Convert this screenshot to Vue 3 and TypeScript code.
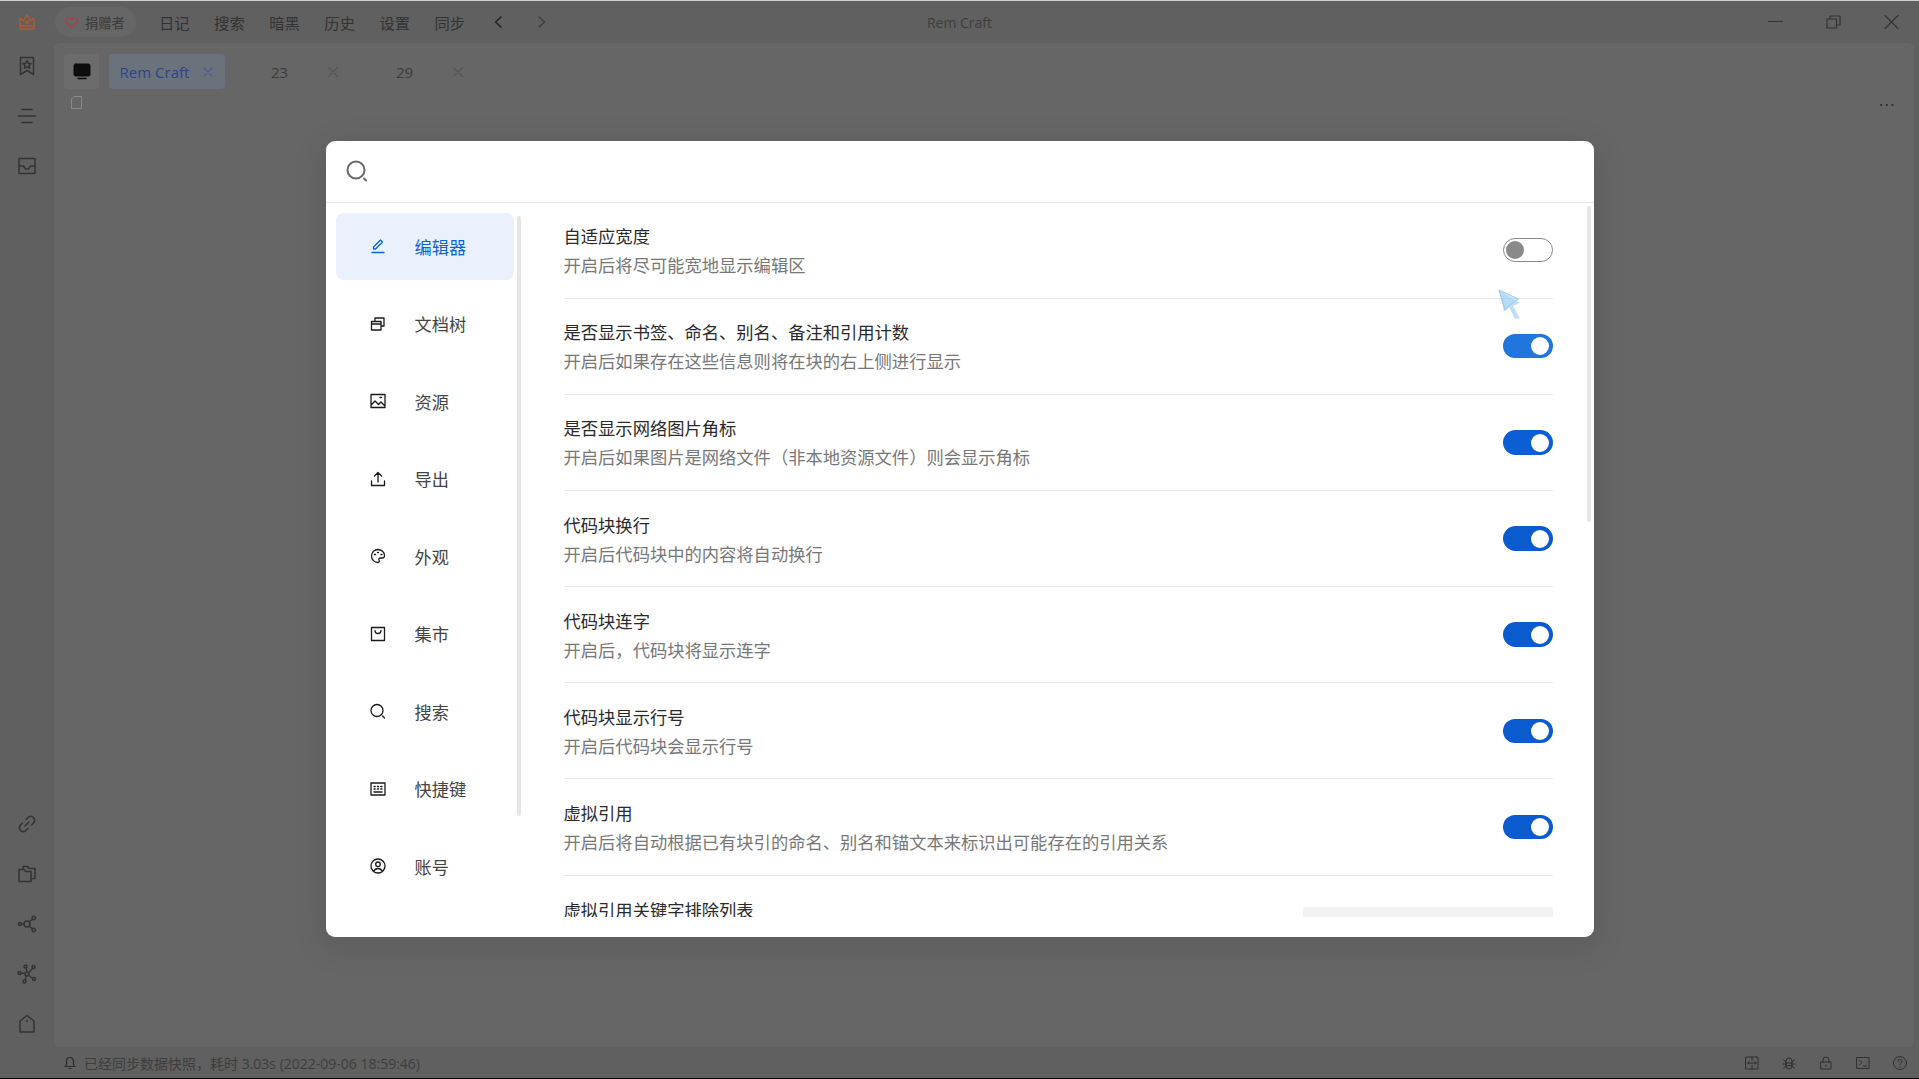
<template>
  <div class="app">
    <div class="topline"></div>
    <header class="topbar">
      <svg class="crown" viewBox="0 0 18 18"><path d="M2 5l3.5 3L9 2l3.5 6L16 5v11H2zM2 13h14" /><circle cx="9" cy="9.5" r="1.3" /></svg>
      <div class="donor">
        <svg class="heart" viewBox="0 0 14 14"><path d="M7 12.6L1.8 7.2a3.2 3.2 0 0 1 0-4.4 3 3 0 0 1 4.3 0L7 3.8l.9-1a3 3 0 0 1 4.3 0 3.2 3.2 0 0 1 0 4.4z" /></svg>
        <span>捐赠者</span>
      </div>
      <nav class="menu">
        <span v-for="m in menus" :key="m">{{ m }}</span>
      </nav>
      <div class="arrows">
        <svg class="back" viewBox="0 0 10 14"><path d="M8 2L2.5 7 8 12" /></svg>
        <svg class="forward" viewBox="0 0 10 14"><path d="M2 2l5.5 5L2 12" /></svg>
      </div>
      <div class="wintitle">Rem Craft</div>
      <div class="winctl">
        <svg viewBox="0 0 15 14"><path d="M0 6.5h15" /></svg>
        <svg viewBox="0 0 15 14"><path d="M1 4h9.5v9H1zM4 4V1h10v9h-3.5" /></svg>
        <svg viewBox="0 0 15 14"><path d="M1 .5l13 13M14 .5l-13 13" /></svg>
      </div>
    </header>

    <div class="middle">
      <aside class="rail">
        <div class="rail-group">
          <svg v-for="i in railTop" :key="i" viewBox="0 0 20 20"><path :d="i" /></svg>
        </div>
        <div class="rail-group">
          <svg v-for="i in railBottom" :key="i" viewBox="0 0 20 20"><path :d="i" /></svg>
        </div>
      </aside>
      <main class="panel">
        <div class="tabs">
          <div class="tab-icon">
            <svg viewBox="0 0 18 18"><rect x="1" y="1" width="16" height="12" rx="1.5" fill="#0d0d0d" stroke="#0d0d0d" /><path d="M5 15.5h8" stroke="#0d0d0d" fill="none" stroke-width="1.6" /></svg>
          </div>
          <div v-for="(t, i) in tabs" :key="t" class="tab" :class="{ on: i === 0 }">
            <span class="tab-name">{{ t }}</span>
            <svg viewBox="0 0 10 10"><path d="M.5.5l9 9M9.5.5l-9 9" /></svg>
          </div>
        </div>
        <div class="docline">
          <svg class="doc" viewBox="0 0 11 13"><path d="M3.5.5h7v12H.5V3.5z" /></svg>
          <span class="dots">...</span>
        </div>
      </main>
    </div>

    <footer class="status">
      <svg class="bell" viewBox="0 0 12 14"><path d="M1 10.5h10L9.5 8.5V5a3.5 3.5 0 0 0-7 0v3.5zM5 12.5h2" /></svg>
      <span class="status-text">已经同步数据快照，耗时 3.03s (2022-09-06 18:59:46)</span>
      <div class="status-icons">
        <svg v-for="i in statusIcons" :key="i" viewBox="0 0 14 14"><path :d="i" /></svg>
      </div>
    </footer>

    <div class="overlay">
      <section class="dialog">
        <div class="search">
          <svg viewBox="0 0 22 22"><circle cx="10" cy="10" r="8.5" /><path d="M18 18.5l2 2" /></svg>
        </div>
        <div class="body">
          <ul class="nav">
            <li v-for="(n, i) in navItems" :key="n.label" :class="{ on: i === 0 }">
              <svg viewBox="0 0 16 16"><path :d="n.icon" /></svg>
              <span>{{ n.label }}</span>
            </li>
          </ul>
          <div class="nav-bar"></div>
          <div class="rows">
            <div v-for="r in rows" :key="r.title" class="row">
              <div class="row-text">
                <div class="row-title">{{ r.title }}</div>
                <div class="row-desc">{{ r.desc }}</div>
              </div>
              <span class="toggle" :class="r.state"></span>
            </div>
            <div class="row last">
              <div class="row-text">
                <div class="row-title">虚拟引用关键字排除列表</div>
                <div class="row-desc">&nbsp;</div>
              </div>
              <div class="field"></div>
            </div>
          </div>
          <div class="rows-bar"></div>
        </div>
        <svg class="cursor" viewBox="0 0 30 34">
          <path class="cursor-glow" d="M4 3l20 12-7 3 7 12-5 1-6-12-5 4z" />
          <path class="cursor-line" d="M3 2l19 9-8 6-5 5z" />
        </svg>
      </section>
    </div>
  </div>
</template>

<script setup lang="ts">
const menus = ['日记', '搜索', '暗黑', '历史', '设置', '同步']
const tabs = ['Rem Craft', '23', '29']

const railTop = [
  'M3.5 1.5h13v17L10 14.5l-6.5 4zM10 4.5l1.3 2.7 2.7.3-2 1.9.6 2.8L10 10.8l-2.6 1.4.6-2.8-2-1.9 2.7-.3z',
  'M5 3.5h10M1.5 10h17M5 16.5h10',
  'M2 2.5h16v15H2zM2 10h4.500l2 3h3l2-3H18',
]
const railBottom = [
  'M8 12l4-4M9 5.500l2.500-2.500a4 4 0 0 1 5.500 5.500L14.500 11M11 14.500L8.500 17A4 4 0 0 1 3 11.500L5.500 9',
  'M6 5V2.500h4.500l1.500 2h6v10h-4M2 5.500h5l1.500 2H14V17.500H2z',
  'M7 10a3 3 0 1 0 6 0 3 3 0 0 0-6 0zM1.500 10a1.500 1.500 0 1 0 3 0 1.500 1.500 0 0 0-3 0zM15 4a1.700 1.700 0 1 0 3.400 0A1.700 1.700 0 0 0 15 4zM15 16a1.700 1.700 0 1 0 3.400 0A1.700 1.700 0 0 0 15 16zM4.500 10H7M12 8l3.500-3M12 12l3.500 3',
  'M8 10a2 2 0 1 0 4 0 2 2 0 0 0-4 0zM1 9a1.500 1.500 0 1 0 3 0 1.500 1.500 0 0 0-3 0zM7 2.500a1.500 1.500 0 1 0 3 0 1.500 1.500 0 0 0-3 0zM15 3a1.500 1.500 0 1 0 3 0 1.500 1.500 0 0 0-3 0zM15.500 15a1.500 1.500 0 1 0 3 0 1.500 1.500 0 0 0-3 0zM6 17.500a1.500 1.500 0 1 0 3 0 1.500 1.500 0 0 0-3 0zM4 9.300h4M9 4l1 4M15.500 4.500L12 8.500M15.500 14.500L12 11.500M8 16l1.500-4.500',
  'M3 7l7-5.500L17 7v11H3zM10 6.500v1',
]
const statusIcons = [
  'M1 1h12v12H1zM7 1v3.500M7 9.500V13M3 7h8M3 7l1.500-1.300M3 7l1.500 1.300M11 7L9.500 5.700M11 7L9.500 8.300',
  'M4 5a3 3 0 0 1 6 0v5a3 3 0 0 1-6 0zM4 7h6M4 9.500h6M1.500 4L4 5.500M12.500 4L10 5.500M1 8h3M13 8h-3M1.500 12L4 10.500M12.500 12L10 10.500',
  'M2 6h10v7H2zM4 6V4a3 3 0 0 1 6 0v2M7 9v1.500',
  'M1 1.500h12v11H1zM3.500 4l2.500 2.500L3.500 9M7.500 10h3',
  'M13.500 7a6.500 6.500 0 1 1-13 0 6.500 6.500 0 0 1 13 0zM5 5.300a2 2 0 1 1 3 1.700c-.7.400-1 .8-1 1.500M7 10.300v.7',
]

const navItems = [
  { label: '编辑器', icon: 'M2 14.500h12M3.500 11V9l7-7 2 2-7 7z' },
  { label: '文档树', icon: 'M5 5V2h9v8h-3M1.500 5.500H11V14H1.500zM1.500 8h9.500' },
  { label: '资源', icon: 'M1 1.500h14v13H1zM1 12l4-4 3.500 3.500L11 9l4 4M10 4.500h1.500' },
  { label: '导出', icon: 'M1.500 10v4.500h13V10M8 11V2M4.500 5L8 1.500 11.500 5' },
  { label: '外观', icon: 'M8 1.500a6.500 6.500 0 1 0 0 13c1.500 0 1.500-1.500 1-2.500s0-2 1.500-2h2c1.500 0 2-1.500 2-2.500 0-3.500-3-6-6.500-6zM4.500 6.500h1M7.500 4.500h1M11 6.500h1' },
  { label: '集市', icon: 'M1.500 1.500h13v13h-13zM5 4.500a3 3 0 0 0 6 0' },
  { label: '搜索', icon: 'M13 7.500a6 6 0 1 1-12 0 6 6 0 0 1 12 0zM12.500 13l2 2' },
  { label: '快捷键', icon: 'M1 2h14v12H1zM4 5.500h1.200M7.400 5.500h1.200M10.800 5.500H12M4 8h1.200M7.400 8h1.200M10.800 8H12M4 11h8' },
  { label: '账号', icon: 'M15 8A7 7 0 1 1 1 8a7 7 0 0 1 14 0zM10.300 6.300a2.300 2.300 0 1 1-4.600 0 2.300 2.300 0 0 1 4.600 0zM3.500 13.500c1-2 2.500-3 4.500-3s3.500 1 4.500 3' },
]

const rows = [
  { title: '自适应宽度', desc: '开启后将尽可能宽地显示编辑区', state: 'off' },
  { title: '是否显示书签、命名、别名、备注和引用计数', desc: '开启后如果存在这些信息则将在块的右上侧进行显示', state: 'light' },
  { title: '是否显示网络图片角标', desc: '开启后如果图片是网络文件（非本地资源文件）则会显示角标', state: 'mid' },
  { title: '代码块换行', desc: '开启后代码块中的内容将自动换行', state: 'dark' },
  { title: '代码块连字', desc: '开启后，代码块将显示连字', state: 'dark' },
  { title: '代码块显示行号', desc: '开启后代码块会显示行号', state: 'dark' },
  { title: '虚拟引用', desc: '开启后将自动根据已有块引的命名、别名和锚文本来标识出可能存在的引用关系', state: 'dark' },
]
</script>

<style>
html, body { margin: 0; background: #606060; overflow: hidden; }
</style>

<style scoped>
* { box-sizing: border-box; }
svg { display: block; fill: none; stroke-linecap: round; stroke-linejoin: round; }

.app {
  position: relative;
  width: 100%;
  height: 100vh;
  display: flex;
  flex-direction: column;
  background: #606060;
  color: #333;
  font-family: "Noto Sans CJK SC", "Open Sans", sans-serif;
  border-bottom: 1px solid #000;
  overflow: hidden;
}
.topline { height: 1px; background: #d0d0d0; flex: none; }

.topbar {
  position: relative;
  height: 42px;
  flex: none;
  display: flex;
  align-items: center;
  padding-left: 18px;
}
.crown { width: 18px; height: 18px; stroke: #b05a30; stroke-width: 1.4; }
.donor {
  margin-left: 19px;
  width: 81px;
  height: 30px;
  border-radius: 15px;
  background: #666;
  display: flex;
  align-items: center;
  padding-left: 10px;
  gap: 7px;
  font-size: 13.3px;
  color: #3a3a3a;
}
.heart { width: 13px; height: 13px; stroke: #b83a3a; stroke-width: 1.2; }
.menu { margin-left: 23px; display: flex; gap: 24.500px; font-size: 15.300px; color: #333; }
.arrows { margin-left: 28px; display: flex; gap: 34px; }
.arrows svg { width: 10px; height: 14px; stroke-width: 1.600; }
.back { stroke: #222; }
.forward { stroke: #3d3d3d; stroke-width: 1.200; }
.wintitle {
  position: absolute;
  left: 0;
  right: 0;
  text-align: center;
  font-family: "Open Sans", sans-serif;
  font-size: 14px;
  color: #3d3d3d;
}
.winctl { margin-left: auto; display: flex; gap: 43px; padding-right: 20px; }
.winctl svg { width: 15px; height: 14px; stroke: #333; stroke-width: 1.200; }

.middle { flex: 1; display: flex; min-height: 0; }
.rail {
  width: 54px;
  flex: none;
  display: flex;
  flex-direction: column;
  justify-content: space-between;
  padding: 13px 0 13px;
}
.rail-group { display: flex; flex-direction: column; gap: 30px; align-items: center; padding-left: 0; }
.rail-group svg { width: 20px; height: 20px; stroke: #333; stroke-width: 1.500; margin-right: 1px; }
.panel {
  flex: 1;
  margin-right: 5px;
  background: #666;
  border-radius: 6px;
  padding: 11px 20px 0 10px;
}
.tabs { display: flex; gap: 9px; }
.tab-icon {
  width: 35px;
  height: 35px;
  margin-right: 1px;
  background: #6c6c6c;
  border-radius: 4px;
  display: flex;
  align-items: center;
  justify-content: center;
}
.tab-icon svg { width: 18px; height: 18px; }
.tab {
  width: 116px;
  height: 35px;
  border-radius: 4px;
  display: flex;
  align-items: center;
  font-family: "Open Sans", sans-serif;
  font-size: 15px;
  color: #3a3a3a;
}
.tab.on { background: #6a727c; color: #2c4488; }
.tab-name { width: 91px; text-align: center; }
.tab svg { width: 10px; height: 10px; margin-left: 3px; stroke: #555; stroke-width: 1.100; }
.tab.on svg { stroke: #4c5f8c; }
.docline { display: flex; justify-content: space-between; align-items: center; height: 22px; margin-top: 2px; }
.doc { width: 11px; height: 13px; margin-left: 7px; stroke: #8a8a8a; stroke-width: 1; }
.dots { color: #2c2c2c; font-size: 15px; line-height: 1; letter-spacing: 1.500px; margin-top: -6px; margin-right: -2px; }

.status {
  height: 31px;
  flex: none;
  display: flex;
  align-items: center;
  padding-left: 64px;
  font-family: "Open Sans", "Noto Sans CJK SC", sans-serif;
  font-size: 14px;
  color: #3d3d3d;
}
.bell { width: 12px; height: 14px; stroke: #2c2c2c; stroke-width: 1.200; }
.status-text { margin-left: 8px; }
.status-icons { margin-left: auto; display: flex; gap: 23px; padding-right: 12px; }
.status-icons svg { width: 14px; height: 14px; stroke: #2f2f2f; stroke-width: 1; }

.overlay {
  position: absolute;
  inset: 0;
  display: flex;
  align-items: center;
  justify-content: center;
}
.dialog {
  position: relative;
  width: 1268px;
  height: 796px;
  margin-top: -1px;
  background: #fff;
  border-radius: 9px;
  display: flex;
  flex-direction: column;
  box-shadow: 0 8px 30px 6px rgba(0, 0, 0, 0.09);
}
.search {
  height: 62px;
  flex: none;
  border-bottom: 1px solid #e6e6e6;
  display: flex;
  align-items: center;
  padding-left: 20px;
}
.search svg { width: 22px; height: 22px; stroke: #6a6a6a; stroke-width: 2; }
.body { position: relative; height: 714px; display: flex; overflow: hidden; }
.nav {
  list-style: none;
  margin: 0;
  padding: 10px 0 0 10px;
  width: 238px;
  flex: none;
}
.nav li {
  width: 178px;
  height: 67px;
  margin-bottom: 10.500px;
  border-radius: 8px;
  display: flex;
  align-items: center;
  padding-left: 34px;
  font-size: 17.200px;
  color: #444;
}
.nav li.on { background: #eaf1fc; color: #0a66d6; }
.nav svg { width: 16px; height: 16px; margin-right: 29px; stroke: #1a1a1a; stroke-width: 1.300; }
.nav li.on svg { stroke: #0a66d6; }
.nav-bar {
  position: absolute;
  left: 191px;
  top: 13px;
  width: 4px;
  height: 600px;
  background: #e6e6e6;
  border-radius: 2px;
}
.rows { flex: 1; padding-right: 41px; min-width: 0; }
.row {
  height: 96.170px;
  border-bottom: 1px solid #e8e8e8;
  display: flex;
  align-items: center;
  justify-content: space-between;
}
.row.last { border-bottom: none; }
.row-title { font-size: 17.300px; line-height: 25px; color: #2a2a2a; }
.row-desc { font-size: 17.300px; line-height: 25px; margin-top: 4px; color: #777; }
.toggle {
  position: relative;
  width: 50px;
  height: 24.500px;
  border-radius: 13px;
  background: #0b5bd0;
  flex: none;
}
.toggle::after {
  content: "";
  position: absolute;
  right: 3.500px;
  top: 3.500px;
  width: 18px;
  height: 18px;
  border-radius: 50%;
  background: #fff;
}
.toggle.light { background: #2076dc; width: 50px; }
.toggle.mid { background: #0b5ed4; }
.toggle.off { background: #fff; border: 1px solid #8a8a8a; }
.toggle.off::after { right: auto; left: 2.500px; top: 2.500px; background: #8a8a8a; }
.field {
  width: 250px;
  height: 34px;
  background: #f2f2f2;
  border-radius: 4px;
  flex: none;
}
.rows-bar {
  position: absolute;
  right: 3px;
  top: 3px;
  width: 4px;
  height: 316px;
  background: #e6e6e6;
  border-radius: 2px;
}
.cursor {
  position: absolute;
  left: 1170px;
  top: 147px;
  width: 30px;
  height: 34px;
  filter: blur(0.6px);
}
.cursor-glow { fill: rgba(120, 185, 240, 0.45); }
.cursor-line { stroke: #9ccdf2; stroke-width: 1.200; fill: rgba(170, 215, 245, 0.4); }
</style>
